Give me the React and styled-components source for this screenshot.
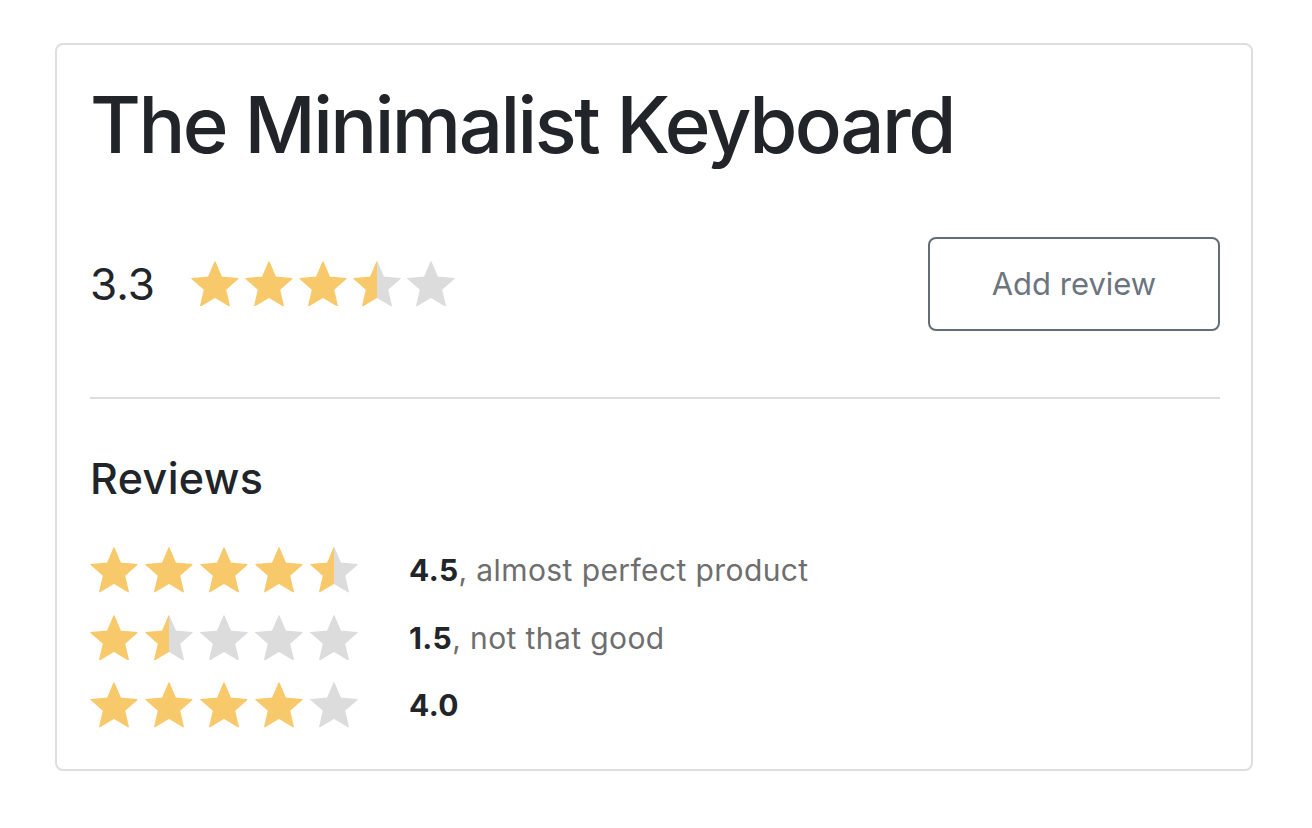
import React from "react";
import styled, { createGlobalStyle } from "styled-components";

const GlobalStyle = createGlobalStyle`
  html, body {
    margin: 0;
    padding: 0;
    background: #ffffff;
  }
  body {
    font-family: Inter, "Noto Sans", "Liberation Sans", sans-serif;
    color: #212529;
  }
`;

const reviews = [
  { rating: 4.5, comment: "almost perfect product" },
  { rating: 1.5, comment: "not that good" },
  { rating: 4.0, comment: "" },
];

const STAR_PATH =
  "M12 17.27L18.18 21l-1.64-7.03L22 9.24l-7.19-.61L12 2 9.19 8.63 2 9.24l5.46 4.73L5.82 21z";

const Star = ({ fill, id }) => (
  <StarSvg viewBox="1.6 1.6 20.8 19.8">
    <defs>
      <linearGradient id={id} x1="0" x2="1" y1="0" y2="0">
        <stop offset={`${fill * 100}%`} stopColor="#f8c96b" />
        <stop offset={`${fill * 100}%`} stopColor="#dcdcdc" />
      </linearGradient>
    </defs>
    <path
      d={STAR_PATH}
      fill={`url(#${id})`}
      stroke={`url(#${id})`}
      strokeWidth="0.6"
      strokeLinejoin="round"
    />
  </StarSvg>
);

const Stars = ({ value, name }) => {
  const rounded = Math.round(value * 2) / 2;
  return (
    <StarRow>
      {[0, 1, 2, 3, 4].map((i) => {
        const fill = Math.max(0, Math.min(1, rounded - i));
        return <Star key={i} fill={fill} id={`${name}-${i}`} />;
      })}
    </StarRow>
  );
};

const App = () => {
  return (
    <>
      <GlobalStyle />
      <Card>
        <Title>The Minimalist Keyboard</Title>
        <Summary>
          <Score>
            <ScoreValue>3.3</ScoreValue>
            <Stars value={3.3} name="avg" />
          </Score>
          <ReviewButton>Add review</ReviewButton>
        </Summary>
        <Divider />
        <SectionTitle>Reviews</SectionTitle>
        <ReviewList>
          {reviews.map((r, i) => (
            <ReviewRow key={i}>
              <Stars value={r.rating} name={`rev${i}`} />
              <ReviewText>
                <strong>{r.rating.toFixed(1)}</strong>
                {r.comment && `, ${r.comment}`}
              </ReviewText>
            </ReviewRow>
          ))}
        </ReviewList>
      </Card>
    </>
  );
};

export default App;

const Card = styled.div`
  box-sizing: border-box;
  width: 1198px;
  margin: 43px 0 0 55px;
  border: 2px solid #dedede;
  border-radius: 8px;
  padding: 33px 31px 41px 33px;
`;

const Title = styled.h1`
  margin: 0;
  font-size: 78px;
  line-height: 1.2;
  font-weight: 500;
  letter-spacing: -2.5px;
  color: #212529;
`;

const Summary = styled.div`
  display: flex;
  justify-content: space-between;
  align-items: center;
  margin-top: 65px;
`;

const Score = styled.div`
  display: flex;
  align-items: center;
  gap: 36px;
`;

const ScoreValue = styled.span`
  font-size: 44px;
  line-height: 1;
  color: #212529;
`;

const StarRow = styled.div`
  display: flex;
  gap: 6px;
`;

const StarSvg = styled.svg`
  display: block;
  width: 48px;
  height: 45.6px;
`;

const ReviewButton = styled.button`
  box-sizing: border-box;
  width: 292px;
  height: 94px;
  border: 2px solid #646d75;
  border-radius: 8px;
  background: #ffffff;
  color: #6c757d;
  font-family: Inter, "Noto Sans", "Liberation Sans", sans-serif;
  font-size: 31px;
  cursor: pointer;
`;

const Divider = styled.hr`
  margin: 66px 0 0;
  border: 0;
  height: 2px;
  background: #dddddd;
`;

const SectionTitle = styled.h2`
  margin: 54px 0 0;
  font-size: 43px;
  line-height: 1.2;
  font-weight: 500;
  letter-spacing: 0.4px;
  color: #212529;
`;

const ReviewList = styled.div`
  display: flex;
  flex-direction: column;
  gap: 22px;
  margin-top: 43px;
`;

const ReviewRow = styled.div`
  display: flex;
  align-items: center;
  gap: 51px;

  ${StarRow} {
    gap: 7px;
  }
`;

const ReviewText = styled.span`
  font-size: 30px;
  letter-spacing: 0.4px;
  color: #6e6e6e;

  strong {
    font-weight: 700;
    color: #212529;
  }
`;
